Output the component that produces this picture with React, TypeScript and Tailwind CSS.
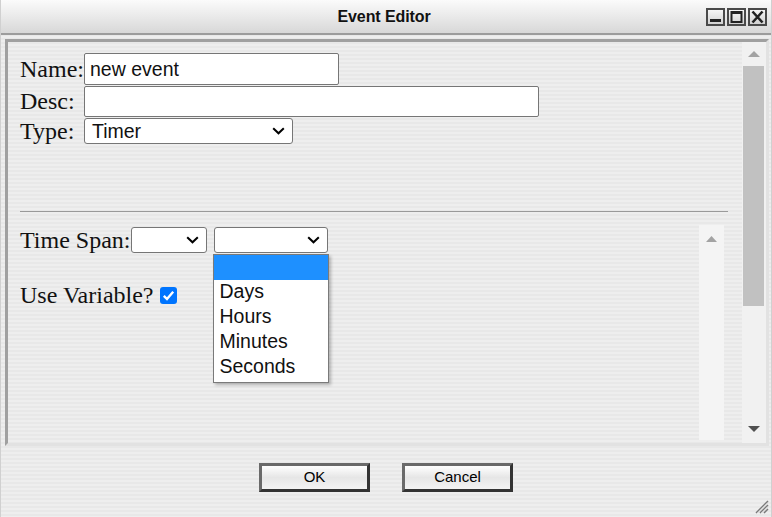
import React from "react";

const serif = "font-['Liberation_Serif',serif] text-[24px] leading-[27px] text-[#111] whitespace-nowrap";

function Chevron() {
  return (
    <svg width="13" height="8" viewBox="0 0 13 8" className="shrink-0">
      <polyline points="1.2,1.2 6.5,6.3 11.8,1.2" fill="none" stroke="#000" strokeWidth="2" />
    </svg>
  );
}

function FakeSelect({ w, value }: { w: string; value?: string }) {
  return (
    <div className={`${w} h-[26px] shrink-0 border border-[#767676] rounded-[3px] bg-white flex items-center pl-[7px] pr-[7px] text-[19.5px] leading-[22px] text-[#111]`}>
      <span className="flex-1 whitespace-nowrap">{value}</span>
      <Chevron />
    </div>
  );
}

function WinBtn({ children }: { children: React.ReactNode }) {
  return (
    <div className="w-[19px] h-[18px] border-2 border-[#4a4a4a] bg-linear-to-b from-[#f6f6f6] to-[#d2d2d2] flex items-center justify-center">
      {children}
    </div>
  );
}

function Btn({ label }: { label: string }) {
  return (
    <div className="w-[111px] h-[29px] border-[3px] border-t-[#6a6a6a] border-l-[#6a6a6a] border-r-[#333] border-b-[#333] bg-linear-to-b from-[#ffffff] via-[#e6e6e6] to-[#f3f3f3] flex items-center justify-center text-[15px] text-black">
      {label}
    </div>
  );
}

export default function App() {
  return (
    <div className="w-[772px] h-[517px] relative flex flex-col border-x border-[#d0d0d0] bg-[image:repeating-linear-gradient(180deg,#eeeeee_0px,#eeeeee_2px,#e8e8e8_2px,#e8e8e8_4px)] font-['Liberation_Sans',Arial,sans-serif] overflow-hidden">
      {/* Title bar */}
      <div className="h-[35px] shrink-0 grid grid-cols-[1fr_auto_1fr] items-center border-b-2 border-[#9c9c9c] bg-linear-to-b from-[#fbfbfb] to-[#d8d8d8] pr-[4px]">
        <div />
        <div className="text-[16px] font-bold text-[#111] tracking-[-0.1px]">Event Editor</div>
        <div className="flex justify-end gap-[2px]">
          <WinBtn>
            <svg width="15" height="14" viewBox="0 0 15 14">
              <rect x="2" y="9" width="11" height="3" fill="#222" />
            </svg>
          </WinBtn>
          <WinBtn>
            <svg width="15" height="14" viewBox="0 0 15 14">
              <rect x="2.5" y="2" width="10" height="10" fill="none" stroke="#222" strokeWidth="2" />
              <rect x="2" y="1" width="11" height="3" fill="#222" />
            </svg>
          </WinBtn>
          <WinBtn>
            <svg width="15" height="14" viewBox="0 0 15 14">
              <path d="M2.5 1.5 L12.5 12.5 M12.5 1.5 L2.5 12.5" stroke="#222" strokeWidth="2.6" />
            </svg>
          </WinBtn>
        </div>
      </div>

      {/* Panel */}
      <div className="mt-[4px] ml-[4px] w-[764px] h-[407px] shrink-0 flex border-[3px] border-t-[#a0a0a0] border-l-[#a0a0a0] border-r-[#e2e2e2] border-b-[#e2e2e2]">
        <div className="flex-1 min-w-0 pl-[12px] pt-[11px] flex flex-col">
          <div className="flex items-center h-[32px]">
            <span className={`${serif} w-[64px] shrink-0`}>Name:</span>
            <div className="w-[255px] h-full border border-[#767676] rounded-[2px] bg-white pl-[5px] text-[19.5px] leading-[22px] text-[#111] flex items-center">
              new event
            </div>
          </div>
          <div className="flex items-center h-[31px] mt-[1px]">
            <span className={`${serif} w-[64px] shrink-0`}>Desc:</span>
            <div className="w-[455px] h-full border border-[#767676] rounded-[2px] bg-white" />
          </div>
          <div className="flex items-center h-[26px] mt-[1px]">
            <span className={`${serif} w-[64px] shrink-0`}>Type:</span>
            <FakeSelect w="w-[209px]" value="Timer" />
          </div>

          <div className="mt-[67px] h-px w-[708px] bg-[#9a9a9a]" />

          <div className="mt-[13px] flex h-[215px] w-[704px]">
            <div className="flex-1 flex flex-col">
              <div className="mt-[2px] flex items-center h-[26px]">
                <span className={`${serif} mr-[1px]`}>Time Span:</span>
                <FakeSelect w="w-[76px]" />
                <div className="relative ml-[7px]">
                  <FakeSelect w="w-[114px]" />
                  <div className="absolute top-[27px] left-[-1px] w-[116px] border border-[#7a7a7a] bg-white shadow-[2px_2px_3px_rgba(0,0,0,0.25)] pb-[2px] text-[19.5px] leading-[22px] text-[#111] z-10">
                    <div className="h-[25px] bg-[#1e90ff]" />
                    {["Days", "Hours", "Minutes", "Seconds"].map((t) => (
                      <div key={t} className="h-[25px] pl-[5px] pb-[4px] flex items-center">
                        {t}
                      </div>
                    ))}
                  </div>
                </div>
              </div>
              <div className="mt-[29px] flex items-start">
                <span className={serif}>Use Variable?</span>
                <div className="ml-[6px] mt-[5px] w-[17px] h-[17px] rounded-[3px] bg-[#0075ff] flex items-center justify-center">
                  <svg width="13" height="11" viewBox="0 0 13 11">
                    <path d="M1.8 5.8 L5 9 L11.2 1.8" fill="none" stroke="#fff" strokeWidth="2.4" />
                  </svg>
                </div>
              </div>
            </div>
            <div className="w-[25px] bg-[#f4f4f4] flex justify-center pt-[11px]">
              <svg width="11" height="6" viewBox="0 0 11 6">
                <polygon points="0,6 5.5,0 11,6" fill="#a3a3a3" />
              </svg>
            </div>
          </div>
        </div>

        {/* Scrollbar */}
        <div className="w-[24px] shrink-0 bg-[#f1f1f1] flex flex-col items-center pt-[9px] pb-[11px]">
          <svg width="12" height="6" viewBox="0 0 12 6">
            <polygon points="0,6 6,0 12,6" fill="#a3a3a3" />
          </svg>
          <div className="mt-[9px] h-[240px] w-[21px] self-start ml-[1px] bg-[#c1c1c1]" />
          <div className="flex-1" />
          <svg width="12" height="6" viewBox="0 0 12 6">
            <polygon points="0,0 12,0 6,6" fill="#505050" />
          </svg>
        </div>
      </div>

      {/* Buttons */}
      <div className="mt-[17px] flex justify-center gap-[32px]">
        <Btn label="OK" />
        <Btn label="Cancel" />
      </div>

      {/* Resize grip */}
      <svg className="absolute right-[2px] bottom-[3px]" width="18" height="18" viewBox="0 0 18 18">
        <path d="M17 5 L5 17 M17 9 L9 17 M17 13 L13 17" stroke="#7a7a7a" strokeWidth="1.5" />
        <path d="M17 6.5 L6.5 17 M17 10.5 L10.5 17" stroke="#d8d8d8" strokeWidth="1" />
      </svg>
    </div>
  );
}
